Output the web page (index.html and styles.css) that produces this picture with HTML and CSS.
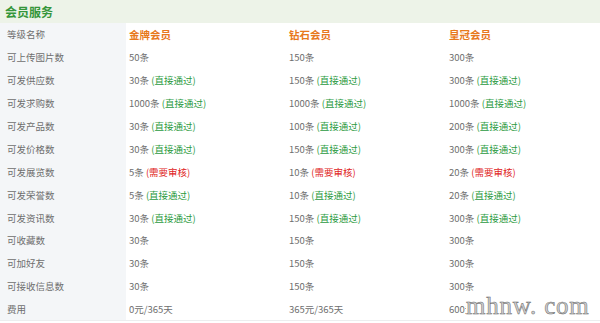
FILE: index.html
```html
<!DOCTYPE html>
<html lang="zh">
<head>
<meta charset="utf-8">
<link rel="stylesheet" href="styles.css">
</head>
<body>
<div class="panel">
  <div class="title">会员服务</div>
  <table class="grid">
    <colgroup><col class="c1"><col class="c2"><col class="c3"><col class="c4"></colgroup>
    <tr><th>等级名称</th><td class="lvl">金牌会员</td><td class="lvl">钻石会员</td><td class="lvl">皇冠会员</td></tr>
    <tr><th>可上传图片数</th><td>50条</td><td>150条</td><td>300条</td></tr>
    <tr><th>可发供应数</th><td>30条 <span class="ok">(直接通过)</span></td><td>150条 <span class="ok">(直接通过)</span></td><td>300条 <span class="ok">(直接通过)</span></td></tr>
    <tr><th>可发求购数</th><td>1000条 <span class="ok">(直接通过)</span></td><td>1000条 <span class="ok">(直接通过)</span></td><td>1000条 <span class="ok">(直接通过)</span></td></tr>
    <tr><th>可发产品数</th><td>30条 <span class="ok">(直接通过)</span></td><td>100条 <span class="ok">(直接通过)</span></td><td>200条 <span class="ok">(直接通过)</span></td></tr>
    <tr><th>可发价格数</th><td>30条 <span class="ok">(直接通过)</span></td><td>150条 <span class="ok">(直接通过)</span></td><td>300条 <span class="ok">(直接通过)</span></td></tr>
    <tr><th>可发展览数</th><td>5条 <span class="rv">(需要审核)</span></td><td>10条 <span class="rv">(需要审核)</span></td><td>20条 <span class="rv">(需要审核)</span></td></tr>
    <tr><th>可发荣誉数</th><td>5条 <span class="ok">(直接通过)</span></td><td>10条 <span class="ok">(直接通过)</span></td><td>20条 <span class="ok">(直接通过)</span></td></tr>
    <tr><th>可发资讯数</th><td>30条 <span class="ok">(直接通过)</span></td><td>150条 <span class="ok">(直接通过)</span></td><td>300条 <span class="ok">(直接通过)</span></td></tr>
    <tr><th>可收藏数</th><td>30条</td><td>150条</td><td>300条</td></tr>
    <tr><th>可加好友</th><td>30条</td><td>150条</td><td>300条</td></tr>
    <tr><th>可接收信息数</th><td>30条</td><td>150条</td><td>300条</td></tr>
    <tr><th>费用</th><td>0元/365天</td><td>365元/365天</td><td>600元/365天</td></tr>
  </table>
  <div class="watermark">mhnw. com</div>
</div>
</body>
</html>
```
FILE: styles.css
```css
html, body { margin: 0; padding: 0; background: #ffffff; }
body {
  width: 600px;
  height: 323px;
  overflow: hidden;
  font-family: "Noto Sans CJK SC", "Liberation Sans", sans-serif;
}
.panel { position: relative; width: 600px; }
.title {
  height: 23px;
  line-height: 23px;
  background: #edf3e8;
  color: #34963a;
  font-size: 12px;
  font-weight: bold;
  padding-left: 5px;
}
.grid {
  width: 600px;
  border-collapse: collapse;
  table-layout: fixed;
  font-size: 9.5px;
  color: #6e6e6e;
}
.c1 { width: 126px; }
.c2 { width: 160px; }
.c3 { width: 160px; }
.c4 { width: 154px; }
.grid tr { height: 22.9px; }
.grid th, .grid td {
  padding: 0 0 0 3px;
  text-align: left;
  font-weight: normal;
  white-space: nowrap;
  vertical-align: middle;
}
.grid tr:last-child th, .grid tr:last-child td { border-bottom: 1px solid #eceeef; }
.grid th { background: #f4f6f8; padding-left: 7px; }
.grid td.lvl { color: #e8791c; font-weight: bold; font-size: 10.5px; }
.ok { color: #2a9a40; }
.rv { color: #e02424; }
.watermark {
  position: absolute;
  left: 466px;
  top: 293px;
  height: 26px;
  line-height: 26px;
  padding-right: 4px;
  background: #ffffff;
  font-family: "Liberation Serif", serif;
  font-size: 25px;
  letter-spacing: 0.8px;
  color: #d0d0d0;
  -webkit-text-stroke: 0.5px #666;
}
```
